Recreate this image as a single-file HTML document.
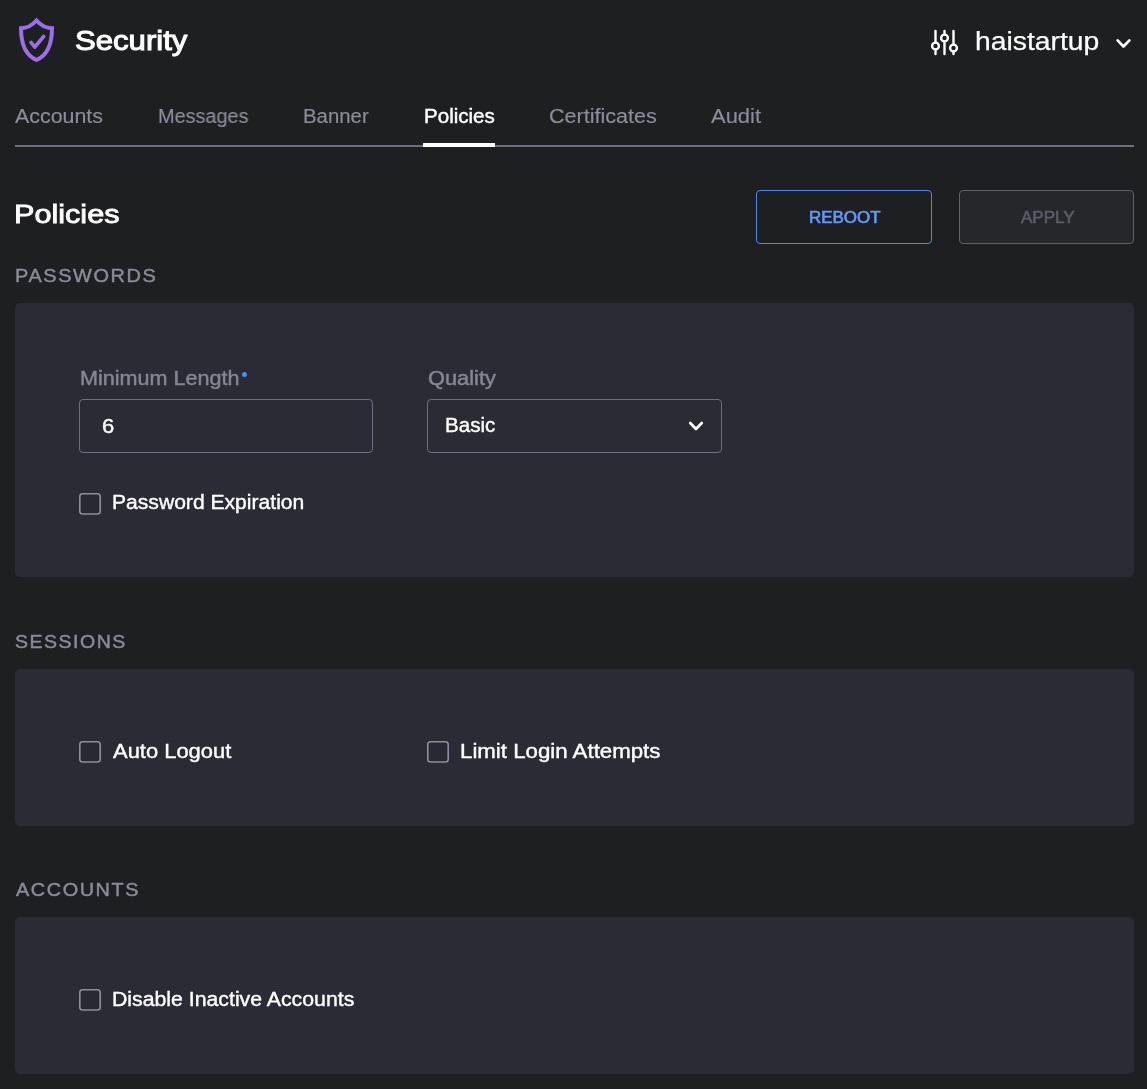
<!DOCTYPE html>
<html lang="en">
<head>
<meta charset="utf-8">
<title>Security - Policies</title>
<style>
  html, body { margin: 0; padding: 0; }
  body {
    width: 1147px; height: 1089px; overflow: hidden; position: relative;
    background: #1e1f21; color: #ffffff;
    font-family: "Liberation Sans", sans-serif;
  }
  .abs { position: absolute; white-space: nowrap; line-height: 1; }
  .t { will-change: transform; position: absolute; white-space: nowrap; line-height: 1; display: inline-block; transform-origin: 0 0; }

  /* header */
  #shield { position: absolute; left: 15px; top: 14px; width: 44px; height: 52px; }
  #title { font-size: 28.5px; font-weight: 400; -webkit-text-stroke: 1.05px #fff; }
  #sliders { position: absolute; left: 926px; top: 24px; width: 36px; height: 36px; }
  #host { font-size: 26px; font-weight: 400; -webkit-text-stroke: 0.25px #fff; }
  #hostchev { position: absolute; left: 1112px; top: 34px; width: 22px; height: 18px; }

  /* tabs */
  .tab { font-size: 20px; color: #8c8c9d; -webkit-text-stroke: 0.15px #8c8c9d; }
  .tab.active { color: #ffffff; -webkit-text-stroke: 0.45px #fff; }
  #tabline { position: absolute; left: 15px; top: 145px; width: 1119px; height: 2px; background: #6d6d85; }
  #tabactive { position: absolute; left: 423px; top: 143px; width: 72px; height: 4px; background: #ffffff; }

  /* page heading */
  #h1 { font-size: 26.5px; font-weight: 400; -webkit-text-stroke: 0.85px #fff; }
  .btn { position: absolute; top: 190px; height: 54px; box-sizing: border-box; border-radius: 4px; border: 1px solid; }
  #reboot { left: 756px; width: 176px; border-color: #4f86ea; }
  #apply { left: 959px; width: 175px; border-color: #61616b; background: #26272a; }
  .btnt { font-size: 16px; font-weight: 400; }
  #reboott { color: #6399f8; -webkit-text-stroke: 0.65px #6399f8; }
  #applyt { color: #5a5b68; -webkit-text-stroke: 0.6px #5a5b68; }

  .sec { font-size: 19px; color: #8b8b9b; letter-spacing: 1.5px; -webkit-text-stroke: 0.45px #8b8b9b; }
  .panel { position: absolute; left: 15px; width: 1119px; background: #2b2b35; border-radius: 5px; }

  .lbl { font-size: 19.6px; color: #858595; -webkit-text-stroke: 0.45px #858595; }
  .field { position: absolute; height: 54px; box-sizing: border-box; border: 1px solid #6c6e85; border-radius: 4px; }
  .val { font-size: 20px; color: #ffffff; -webkit-text-stroke: 0.4px #fff; }
  .cb { position: absolute; width: 22px; height: 22px; overflow: visible; fill: #292932; stroke: #8d8da0; stroke-width: 1.600; }
  .cbl { font-size: 20px; color: #ffffff; -webkit-text-stroke: 0.4px #fff; }
</style>
</head>
<body>

<!-- Header -->
<svg id="shield" viewBox="0 0 44 52" fill="none" stroke="#9a6fe8" stroke-linecap="round" stroke-linejoin="round">
  <path stroke-width="4" stroke-linejoin="miter" d="M21.5 6.500 C17.5 11 12 14.2 6 14.2 C6 29.500 10.500 41.200 21.5 46 C32.500 41.200 37 29.500 37 14.2 C31 14.2 25.500 11 21.5 6.500 Z"/>
  <path stroke-width="3.6" d="M16 28.300 L19.800 33 L28.600 22.500"/>
</svg>
<span id="title" class="t" style="left:75.00px; top:26px; transform:scaleX(1.0916)">Security</span>

<svg id="sliders" viewBox="0 0 36 36" fill="none" stroke="#ffffff" stroke-width="2.400" stroke-linecap="round">
  <path d="M9.500 7 V18.500 M9.500 25.500 V30"/>
  <circle cx="9.500" cy="22" r="3.400"/>
  <path d="M18.500 7 V10.500 M18.500 17.500 V30"/>
  <circle cx="18.500" cy="14" r="3.400"/>
  <path d="M27.500 7 V20.500 M27.500 27.500 V30"/>
  <circle cx="27.500" cy="24" r="3.400"/>
</svg>
<span id="host" class="t" style="left:975.30px; top:28px; transform:scaleX(1.0882)">haistartup</span>
<svg id="hostchev" viewBox="0 0 22 18" fill="none" stroke="#ffffff" stroke-width="2.700" stroke-linecap="round" stroke-linejoin="round">
  <path d="M5.600 6.400 L11.500 12.500 L17.400 6.400"/>
</svg>

<!-- Tabs -->
<span id="tab1" class="t tab" style="left:15.20px; top:106px; transform:scaleX(1.0698)">Accounts</span>
<span id="tab2" class="t tab" style="left:157.60px; top:106px; transform:scaleX(0.9917)">Messages</span>
<span id="tab3" class="t tab" style="left:302.50px; top:106px; transform:scaleX(1.0183)">Banner</span>
<span id="tab4" class="t tab active" style="left:423.50px; top:106px; transform:scaleX(1.0275)">Policies</span>
<span id="tab5" class="t tab" style="left:548.60px; top:106px; transform:scaleX(1.0787)">Certificates</span>
<span id="tab6" class="t tab" style="left:711.10px; top:106px; transform:scaleX(1.0971)">Audit</span>
<div id="tabline"></div>
<div id="tabactive"></div>

<!-- Heading + buttons -->
<span id="h1" class="t" style="left:14.30px; top:201px; transform:scaleX(1.1549)">Policies</span>
<div id="reboot" class="btn"></div>
<span id="reboott" class="t btnt" style="left:809.10px; top:210.3px; transform:scaleX(1.0578)">REBOOT</span>
<div id="apply" class="btn"></div>
<span id="applyt" class="t btnt" style="left:1020.70px; top:210.3px; transform:scaleX(1.0658)">APPLY</span>

<!-- Passwords -->
<span id="sec1" class="t sec" style="left:14.80px; top:266px; transform:scaleX(1.0492)">PASSWORDS</span>
<div class="panel" style="top:303px; height:274px"></div>
<span id="lbl1" class="t lbl" style="left:79.50px; top:369px; transform:scaleX(1.1003)">Minimum Length</span>
<span class="abs" style="left:242px; top:372.3px; width:5.2px; height:5.2px; border-radius:50%; background:#4f8bf0"></span>
<div class="field" style="left:79px; top:399px; width:294px"></div>
<span id="val1" class="t val" style="left:101.60px; top:416px; transform:scaleX(1.1000)">6</span>
<span id="lbl2" class="t lbl" style="left:428.40px; top:369px; transform:scaleX(1.1131)">Quality</span>
<div class="field" style="left:427px; top:399px; width:295px"></div>
<span id="val2" class="t val" style="left:444.70px; top:415px; transform:scaleX(1.0279)">Basic</span>
<svg class="abs" style="left:684px; top:416px; width:22px; height:20px" viewBox="0 0 22 20" fill="none" stroke="#ffffff" stroke-width="2.700" stroke-linecap="round" stroke-linejoin="round">
  <path d="M6.200 7 L12 13 L17.800 7"/>
</svg>
<svg class="cb" style="left:79px; top:492.6px" viewBox="0 0 22 22"><rect x="0.800" y="0.800" width="20.400" height="20.200" rx="2.800" ry="2.800"/></svg>
<span id="cbl1" class="t cbl" style="left:111.90px; top:492px; transform:scaleX(1.0548)">Password Expiration</span>

<!-- Sessions -->
<span id="sec2" class="t sec" style="left:15.20px; top:632px; transform:scaleX(1.0252)">SESSIONS</span>
<div class="panel" style="top:669px; height:157px"></div>
<svg class="cb" style="left:79px; top:741.2px" viewBox="0 0 22 22"><rect x="0.800" y="0.800" width="20.400" height="20.200" rx="2.800" ry="2.800"/></svg>
<span id="cbl2" class="t cbl" style="left:112.90px; top:741px; transform:scaleX(1.0966)">Auto Logout</span>
<svg class="cb" style="left:427px; top:741.2px" viewBox="0 0 22 22"><rect x="0.800" y="0.800" width="20.400" height="20.200" rx="2.800" ry="2.800"/></svg>
<span id="cbl3" class="t cbl" style="left:459.80px; top:741px; transform:scaleX(1.1130)">Limit Login Attempts</span>

<!-- Accounts -->
<span id="sec3" class="t sec" style="left:16.40px; top:879.5px; transform:scaleX(1.0456)">ACCOUNTS</span>
<div class="panel" style="top:917px; height:157px"></div>
<svg class="cb" style="left:79px; top:989.2px" viewBox="0 0 22 22"><rect x="0.800" y="0.800" width="20.400" height="20.200" rx="2.800" ry="2.800"/></svg>
<span id="cbl4" class="t cbl" style="left:112.20px; top:989px; transform:scaleX(1.0630)">Disable Inactive Accounts</span>

</body>
</html>
